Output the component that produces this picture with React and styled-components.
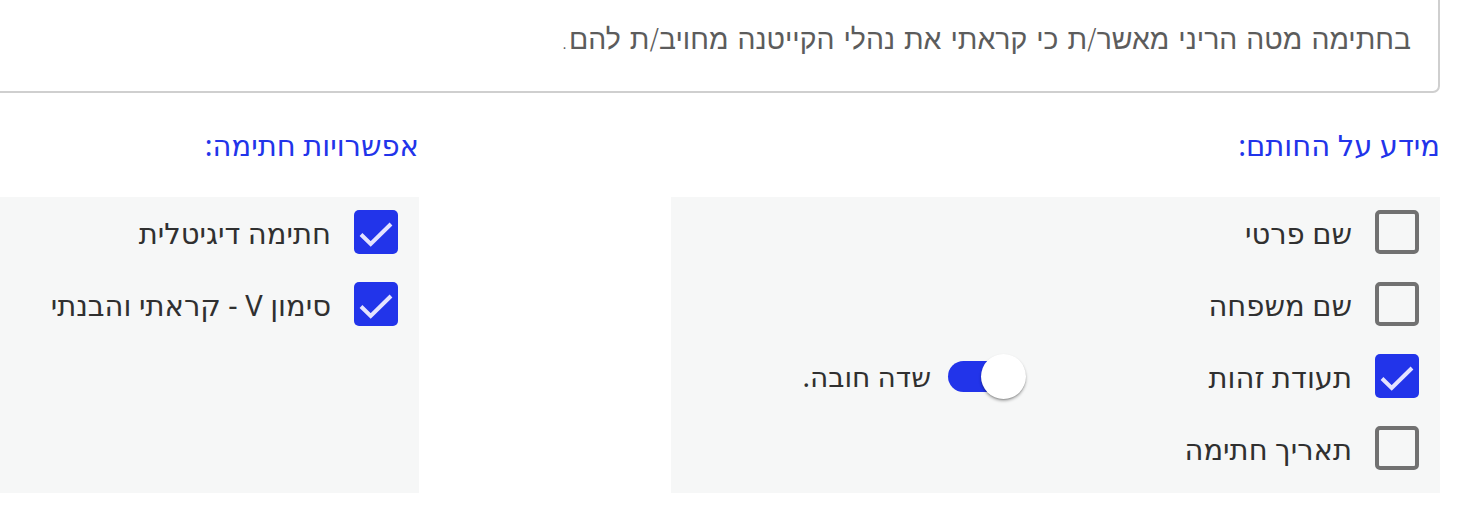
import React from "react";
import styled, { createGlobalStyle } from "styled-components";

const Global = createGlobalStyle`
  html, body { margin: 0; padding: 0; background: #ffffff; }
  body { font-family: "Noto Sans", "DejaVu Sans", sans-serif; overflow: hidden; }
`;

const BLUE = "#2234ea";

const Page = styled.div`
  direction: rtl;
  width: 1458px;
  height: 516px;
  overflow: hidden;
  padding-right: 18px;
  box-sizing: border-box;
`;

const Notice = styled.div`
  margin-top: -40px;
  margin-left: -20px;
  height: 133px;
  box-sizing: border-box;
  border: 2px solid #cfcfcf;
  border-radius: 7px;
  padding: 60px 27px 0 0;
  font-family: "DejaVu Sans", sans-serif;
  font-weight: 300;
  font-size: 28.4px;
  line-height: 36px;
  white-space: nowrap;
  color: #5c5c5c;
`;

const Columns = styled.div`
  display: grid;
  grid-template-columns: 769px 419px;
  justify-content: space-between;
  margin-top: 35px;
`;

const Column = styled.div`
  display: flex;
  flex-direction: column;
`;

const Heading = styled.h3`
  margin: 0 0 34px 0;
  height: 35px;
  line-height: 34px;
  font-weight: 400;
  font-size: 29px;
  color: ${BLUE};
`;

const Panel = styled.div`
  background: #f6f7f7;
  height: 296px;
  box-sizing: border-box;
  padding: 13px 21px 0 0;
  display: flex;
  flex-direction: column;
  gap: 28px;
`;

const Row = styled.div`
  display: flex;
  align-items: center;
  height: 44px;
`;

const Option = styled.label`
  display: flex;
  align-items: center;
  gap: 23px;
  width: ${(p) => (p.$wide ? "404px" : "auto")};
  flex-shrink: 0;
  font-size: 29px;
  color: #303030;
`;

const Box = styled.span`
  width: 44px;
  height: 44px;
  box-sizing: border-box;
  border-radius: 5px;
  flex-shrink: 0;
  display: flex;
  align-items: center;
  justify-content: center;
  background: ${(p) => (p.$checked ? BLUE : "transparent")};
  border: ${(p) => (p.$checked ? "none" : "4px solid #717171")};
`;

const SwitchWrap = styled.label`
  display: flex;
  align-items: center;
  gap: 17px;
  font-size: 28px;
  color: #303030;
`;

const Track = styled.span`
  position: relative;
  width: 67px;
  height: 31px;
  border-radius: 16px;
  background: ${BLUE};
  flex-shrink: 0;
`;

const Knob = styled.span`
  position: absolute;
  top: -7px;
  right: -11px;
  width: 45px;
  height: 45px;
  border-radius: 50%;
  background: #ffffff;
  box-shadow: 0 2px 3px rgba(0, 0, 0, 0.3), 0 1px 1px rgba(0, 0, 0, 0.15);
`;

const Check = () => (
  <svg width="44" height="44" viewBox="0 0 44 44">
    <path d="M7 24.5 L16.7 34 L37 14" fill="none" stroke="#e4e3ff" strokeWidth="4" strokeLinecap="butt" />
  </svg>
);

function CheckOption({ checked, label, wide }) {
  return (
    <Option $wide={wide}>
      <Box $checked={checked}>{checked && <Check />}</Box>
      <span>{label}</span>
    </Option>
  );
}

export default function App() {
  return (
    <Page>
      <Global />
      <Notice>בחתימה מטה הריני מאשר/ת כי קראתי את נהלי הקייטנה מחויב/ת להם.</Notice>
      <Columns>
        <Column>
          <Heading>מידע על החותם:</Heading>
          <Panel>
            <Row>
              <CheckOption label="שם פרטי" />
            </Row>
            <Row>
              <CheckOption label="שם משפחה" />
            </Row>
            <Row>
              <CheckOption wide checked label="תעודת זהות" />
              <SwitchWrap>
                <Track>
                  <Knob />
                </Track>
                <span>שדה חובה.</span>
              </SwitchWrap>
            </Row>
            <Row>
              <CheckOption label="תאריך חתימה" />
            </Row>
          </Panel>
        </Column>
        <Column>
          <Heading>אפשרויות חתימה:</Heading>
          <Panel>
            <Row>
              <CheckOption checked label="חתימה דיגיטלית" />
            </Row>
            <Row>
              <CheckOption checked label="סימון V - קראתי והבנתי" />
            </Row>
          </Panel>
        </Column>
      </Columns>
    </Page>
  );
}
